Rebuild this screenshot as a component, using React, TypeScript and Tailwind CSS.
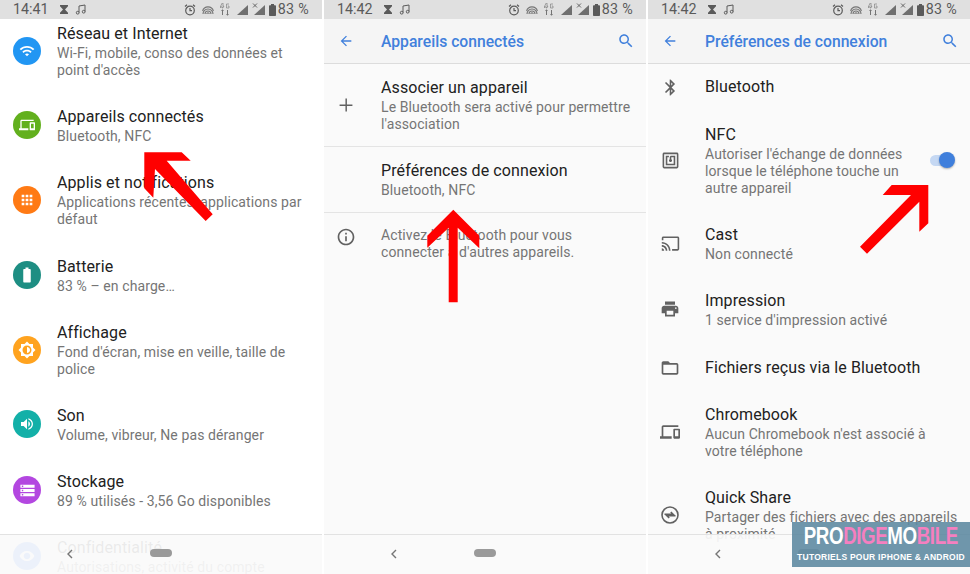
import React from "react";

const P = {
  wifi: "M1 9l2 2c4.97-4.97 13.03-4.97 18 0l2-2C16.93 2.93 7.08 2.93 1 9zm8 8l3 3 3-3c-1.65-1.66-4.34-1.66-6 0zm-4-4l2 2c2.76-2.76 7.24-2.76 10 0l2-2C15.14 9.14 8.87 9.14 5 13z",
  devices: "M4 6h18V4H4c-1.1 0-2 .9-2 2v11H0v3h14v-3H4V6zm19 2h-6c-.55 0-1 .45-1 1v10c0 .55.45 1 1 1h6c.55 0 1-.45 1-1V9c0-.55-.45-1-1-1zm-1 9h-4v-7h4v7z",
  battery: "M15.67 4H14V2h-4v2H8.33C7.6 4 7 4.6 7 5.33v15.33C7 21.4 7.6 22 8.33 22h7.33c.74 0 1.34-.6 1.34-1.33V5.33C17 4.6 16.4 4 15.67 4z",
  bright: "M20 8.69V4h-4.69L12 .69 8.69 4H4v4.69L.69 12 4 15.31V20h4.69L12 23.31 15.31 20H20v-4.69L23.31 12 20 8.69zM12 18c-3.31 0-6-2.69-6-6s2.69-6 6-6 6 2.69 6 6-2.69 6-6 6zm0-10v8c2.21 0 4-1.79 4-4s-1.79-4-4-4z",
  volume: "M3 9v6h4l5 5V4L7 9H3zm13.5 3c0-1.77-1.02-3.29-2.5-4.03v8.05c1.48-.73 2.5-2.25 2.5-4.02zM14 3.23v2.06c2.89.86 5 3.54 5 6.71s-2.11 5.85-5 6.71v2.06c4.01-.91 7-4.49 7-8.77s-2.99-7.86-7-8.77z",
  storage: "M2 20h20v-4H2v4zm2-3h2v2H4v-2zM2 4v4h20V4H2zm4 3H4V5h2v2zm-4 7h20v-4H2v4zm2-3h2v2H4v-2z",
  apps: "M4 8h4V4H4v4zm6 12h4v-4h-4v4zm-6 0h4v-4H4v4zm0-6h4v-4H4v4zm6 0h4v-4h-4v4zm6-10v4h4V4h-4zm-6 4h4V4h-4v4zm6 6h4v-4h-4v4zm0 6h4v-4h-4v4z",
  eye: "M12 4.5C7 4.5 2.73 7.61 1 12c1.73 4.39 6 7.5 11 7.5s9.27-3.11 11-7.5c-1.73-4.39-6-7.5-11-7.5zM12 17c-2.76 0-5-2.24-5-5s2.24-5 5-5 5 2.24 5 5-2.24 5-5 5z",
  back: "M20 11H7.83l5.59-5.59L12 4l-8 8 8 8 1.41-1.41L7.83 13H20v-2z",
  search: "M15.5 14h-.79l-.28-.27C15.41 12.59 16 11.11 16 9.5 16 5.91 13.09 3 9.5 3S3 5.91 3 9.5 5.91 16 9.5 16c1.61 0 3.09-.59 4.23-1.57l.27.28v.79l5 4.99L20.49 19l-4.99-5zm-6 0C7.01 14 5 11.99 5 9.5S7.01 5 9.5 5 14 7.01 14 9.5 11.99 14 9.5 14z",
  info: "M11 7h2v2h-2zm0 4h2v6h-2zm1-9C6.48 2 2 6.48 2 12s4.48 10 10 10 10-4.48 10-10S17.52 2 12 2zm0 18c-4.41 0-8-3.59-8-8s3.59-8 8-8 8 3.59 8 8-3.59 8-8 8z",
  plus: "M19 13h-6v6h-1.6v-6H5v-1.6h6.4V5H13v6.4h6z",
  bluetooth: "M17.71 7.71L12 2h-1v7.59L6.41 5 5 6.41 10.59 12 5 17.59 6.41 19 11 14.41V22h1l5.71-5.71-4.3-4.29 4.3-4.29zM13 5.83l1.88 1.88L13 9.59V5.83zm1.88 10.46L13 18.17v-3.76l1.88 1.88z",
  nfc: "M20 2H4c-1.1 0-2 .9-2 2v16c0 1.1.9 2 2 2h16c1.1 0 2-.9 2-2V4c0-1.1-.9-2-2-2zm0 18H4V4h16v16zM18 6h-5c-1.1 0-2 .9-2 2v2.28c-.6.35-1 .98-1 1.72 0 1.1.9 2 2 2s2-.9 2-2c0-.74-.4-1.38-1-1.72V8h3v8H8V8h2V6H6v12h12V6z",
  cast: "M21 3H3c-1.1 0-2 .9-2 2v3h2V5h18v14h-7v2h7c1.1 0 2-.9 2-2V5c0-1.1-.9-2-2-2zM1 18v3h3c0-1.66-1.34-3-3-3zm0-4v2c2.76 0 5 2.24 5 5h2c0-3.87-3.13-7-7-7zm0-4v2c4.97 0 9 4.03 9 9h2c0-6.08-4.93-11-11-11z",
  print: "M19 8H5c-1.66 0-3 1.34-3 3v6h4v4h12v-4h4v-6c0-1.66-1.34-3-3-3zm-3 11H8v-5h8v5zm3-7c-.55 0-1-.45-1-1s.45-1 1-1 1 .45 1 1-.45 1-1 1zm-1-9H6v4h12V3z",
  folder: "M20 6h-8l-2-2H4c-1.1 0-1.99.9-1.99 2L2 18c0 1.1.9 2 2 2h16c1.1 0 2-.9 2-2V8c0-1.1-.9-2-2-2zm0 12H4V8h16v10z",
};

function Ico({ d, size = 24, className = "" }: { d: string; size?: number; className?: string }) {
  return (
    <svg width={size} height={size} viewBox="0 0 24 24" className={"block shrink-0 fill-current " + className}>
      <path d={d} />
    </svg>
  );
}

function Circle({ bg, d, size = 16 }: { bg: string; d: string; size?: number }) {
  return (
    <div className={"flex h-[28px] w-[28px] shrink-0 items-center justify-center rounded-full text-white " + bg}>
      <Ico d={d} size={size} />
    </div>
  );
}

function QuickShare() {
  return (
    <svg width="20" height="20" viewBox="0 0 20 20" fill="none" stroke="currentColor" strokeWidth="1.6" className="block shrink-0">
      <circle cx="10" cy="10" r="8" />
      <path d="M4.500 9.200H13L10.800 7" />
      <path d="M15.500 10.800H7L9.200 13" />
    </svg>
  );
}

function Text({ title, lines = [] }: { title: string; lines?: string[] }) {
  return (
    <div className={"min-w-0 flex-1 " + (lines.length ? "pt-[1px]" : "")}>
      <div className="h-[20px] text-[16px] leading-[20px] tracking-[0.1px] whitespace-nowrap text-[#212121]">{title}</div>
      {lines.length > 0 && (
        <div className="mt-[1px]">
          {lines.map((l) => (
            <div key={l} className="h-[17px] text-[14px] leading-[17px] tracking-[0.1px] whitespace-nowrap text-[#757575]">
              {l}
            </div>
          ))}
        </div>
      )}
    </div>
  );
}

function Row({
  icon,
  title,
  lines = [],
  h,
  iconW = "w-[57px] justify-center pr-[13px]",
  border = false,
  extra,
}: {
  icon?: React.ReactNode;
  title: string;
  lines?: string[];
  h: string;
  iconW?: string;
  border?: boolean;
  extra?: React.ReactNode;
}) {
  return (
    <div className={"flex shrink-0 items-center " + h + (border ? " border-b border-[#e4e4e4]" : "")}>
      <div className={"flex shrink-0 text-[#616161] " + iconW}>{icon}</div>
      <Text title={title} lines={lines} />
      {extra}
    </div>
  );
}

function StatusBar({ time }: { time: string }) {
  return (
    <div className="relative z-10 flex h-[19px] shrink-0 items-center bg-[#e0e0e0] pl-[13px] pr-[13px] text-[#5a5a5a]">
      <span className="w-[45px] text-[14.3px] leading-[19px]">{time}</span>
      <svg width="10" height="9" viewBox="0 0 10 9" className="ml-[1px] fill-current">
        <path d="M1 0h8v1.2L6 4.5l3 3.3V9H1V7.8l3-3.3-3-3.3z" />
      </svg>
      <svg width="11" height="11" viewBox="0 0 11 11" fill="none" stroke="currentColor" strokeWidth="1" className="ml-[6px]">
        <path d="M4 8.5V2L10 1V7.5" />
        <circle cx="2.7" cy="8.7" r="1.4" />
        <circle cx="8.7" cy="7.700" r="1.4" />
      </svg>
      <div className="flex-1" />
      <svg width="12" height="12" viewBox="0 0 12 12" fill="none" stroke="currentColor" strokeWidth="1.2">
        <circle cx="6" cy="6.5" r="4.3" />
        <path d="M6 4v2.7h2M1 2.5 3 .8M11 2.5 9 .8" />
      </svg>
      <svg width="12" height="12" viewBox="0 0 12 12" fill="none" stroke="currentColor" strokeWidth="1.1" className="ml-[6px] opacity-80">
        <path d="M1 10a5 5 0 0 1 10 0M3 10a3 3 0 0 1 6 0M4.8 10a1.2 1.2 0 0 1 2.4 0" />
        <path d="M.6 7A5.6 5.6 0 0 1 11.4 7" />
      </svg>
      <svg width="10" height="13" viewBox="0 0 10 13" className="ml-[6px] fill-current opacity-80">
        <path d="M0 4.5 2.2 0h.8v3h.7v.8H3v1.2H2.2V3.8H.8V4.5zM9 1H6.500v4H9V3H7.800" stroke="currentColor" strokeWidth=".6" fill="none" />
        <path d="M2 12V8H1l1.5-1.8L4 8H3v4zM7 7v4H6l1.5 1.8L9 11H8V7z" />
      </svg>
      <svg width="12" height="12" viewBox="0 0 12 12" className="ml-[6px] fill-current">
        <path d="M12 1v10H1z" opacity=".85" />
      </svg>
      <svg width="14" height="13" viewBox="0 0 14 13" className="ml-[4px] fill-current">
        <path d="M13 2v10H2z" opacity=".85" />
        <path d="M1 .5 5 4.5M5 .5 1 4.5" stroke="currentColor" strokeWidth=".9" />
      </svg>
      <svg width="7" height="12" viewBox="0 0 7 12" className="ml-[3px] fill-current">
        <path d="M2 0h3v1.300h1.200a.8.8 0 0 1 .8.8v9.100a.8.8 0 0 1-.8.8H.8a.8.8 0 0 1-.8-.8V2.100a.8.8 0 0 1 .8-.8H2z" />
      </svg>
      <span className="ml-[2px] text-[14.3px] leading-[19px] tracking-[0.3px]">83 %</span>
    </div>
  );
}

function NavBar() {
  return (
    <div className="absolute inset-x-0 bottom-0 flex h-[40px] items-start border-t border-[#e2e2e2] bg-[#fafafa]/[0.93] pt-[14px]">
      <svg width="8" height="10" viewBox="0 0 8 10" fill="none" stroke="#757575" strokeWidth="1.4" className="ml-[66px]">
        <path d="M6 1 2 5l4 4" />
      </svg>
      <div className="ml-[76px] h-[8px] w-[22px] rounded-full bg-[#9a9a9a]" />
    </div>
  );
}

function ActionBar({ title }: { title: string }) {
  return (
    <div className="flex h-[45px] shrink-0 items-center border-b border-[#dcdcdc] bg-[#f5f5f5] pl-[14px] pr-[11px] text-[#4180dc]">
      <Ico d={P.back} size={16} />
      <div className="ml-[27px] mt-[1px] flex-1 text-[15.7px] font-medium leading-[20px]">{title}</div>
      <Ico d={P.search} size={18} />
    </div>
  );
}

const I1 = "w-[57px] justify-center pr-[3px]";
const I2 = "w-[57px] justify-center pr-[13px]";

export default function App() {
  return (
    <div className="relative flex h-[574px] w-[970px] justify-between overflow-hidden bg-white font-['Roboto',sans-serif]">
      {/* left */}
      <div className="relative flex h-full w-[322px] flex-col overflow-hidden bg-white">
        <StatusBar time="14:41" />
        <div className="-mt-[10px] flex flex-col">
          <Row h="h-[83px]" iconW={I1} icon={<Circle bg="bg-[#2196f3]" d={P.wifi} />} title="Réseau et Internet" lines={["Wi-Fi, mobile, conso des données et", "point d'accès"]} />
          <Row h="h-[66px]" iconW={I1} icon={<Circle bg="bg-[#62b01e]" d={P.devices} />} title="Appareils connectés" lines={["Bluetooth, NFC"]} />
          <Row h="h-[84px]" iconW={I1} icon={<Circle bg="bg-[#ff7a14]" d={P.apps} />} title="Applis et notifications" lines={["Applications récentes, applications par", "défaut"]} />
          <Row h="h-[66px]" iconW={I1} icon={<Circle bg="bg-[#1e8e83]" d={P.battery} size={18} />} title="Batterie" lines={["83 % – en charge…"]} />
          <Row h="h-[83px]" iconW={I1} icon={<Circle bg="bg-[#ffa31f]" d={P.bright} size={18} />} title="Affichage" lines={["Fond d'écran, mise en veille, taille de", "police"]} />
          <Row h="h-[66px]" iconW={I1} icon={<Circle bg="bg-[#13b0a8]" d={P.volume} />} title="Son" lines={["Volume, vibreur, Ne pas déranger"]} />
          <Row h="h-[66px]" iconW={I1} icon={<Circle bg="bg-[#b347e0]" d={P.storage} size={17} />} title="Stockage" lines={["89 % utilisés - 3,56 Go disponibles"]} />
          <Row h="h-[66px]" iconW={I1} icon={<Circle bg="bg-[#4285f4]" d={P.eye} />} title="Confidentialité" lines={["Autorisations, activité du compte"]} />
        </div>
        <NavBar />
      </div>

      {/* middle */}
      <div className="relative flex h-full w-[322px] flex-col overflow-hidden bg-[#fafafa]">
        <StatusBar time="14:42" />
        <ActionBar title="Appareils connectés" />
        <Row h="h-[83px]" border iconW={I2} icon={<Ico d={P.plus} size={22} />} title="Associer un appareil" lines={["Le Bluetooth sera activé pour permettre", "l'association"]} />
        <Row h="h-[66px]" border title="Préférences de connexion" lines={["Bluetooth, NFC"]} />
        <div className="flex pt-[14px]">
          <div className="flex w-[57px] justify-center pr-[13px] text-[#616161]">
            <Ico d={P.info} size={20} />
          </div>
          <div className="text-[14px] leading-[17px] tracking-[0.1px] text-[#757575]">
            <div>Activez le Bluetooth pour vous</div>
            <div>connecter à d'autres appareils.</div>
          </div>
        </div>
        <NavBar />
      </div>

      {/* right */}
      <div className="relative flex h-full w-[322px] flex-col overflow-hidden bg-[#fafafa]">
        <StatusBar time="14:42" />
        <ActionBar title="Préférences de connexion" />
        <Row h="h-[46px]" iconW={I2} icon={<Ico d={P.bluetooth} size={19} />} title="Bluetooth" />
        <Row
          h="h-[100px]"
          iconW={I2}
          icon={<Ico d={P.nfc} size={19} />}
          title="NFC"
          lines={["Autoriser l'échange de données", "lorsque le téléphone touche un", "autre appareil"]}
          extra={
            <div className="relative mr-[18px] h-[11px] w-[22px] rounded-full bg-[#c5d8f3]">
              <div className="absolute -right-[3px] -top-[3px] h-[16px] w-[16px] rounded-full bg-[#3f7fdc] shadow-[0_1px_2px_rgba(0,0,0,0.3)]" />
            </div>
          }
        />
        <Row h="h-[66px]" iconW={I2} icon={<Ico d={P.cast} size={19} />} title="Cast" lines={["Non connecté"]} />
        <Row h="h-[66px]" iconW={I2} icon={<Ico d={P.print} size={20} />} title="Impression" lines={["1 service d'impression activé"]} />
        <Row h="h-[48px] pt-[4px]" iconW={I2} icon={<Ico d={P.folder} size={20} />} title="Fichiers reçus via le Bluetooth" />
        <Row h="h-[83px]" iconW={I2} icon={<Ico d={P.devices} size={20} />} title="Chromebook" lines={["Aucun Chromebook n'est associé à", "votre téléphone"]} />
        <Row h="h-[83px]" iconW={I2} icon={<QuickShare />} title="Quick Share" lines={["Partager des fichiers avec des appareils", "à proximité"]} />
        <NavBar />
      </div>

      {/* annotation arrows */}
      <svg width="970" height="574" viewBox="0 0 970 574" className="pointer-events-none absolute left-0 top-0 fill-[#ff0000]">
        <polygon points="144.300,152.300 181.700,152.300 190.700,160.700 166.700,160.700 212.700,214.300 205.700,221 155,169 153.300,197.700 144.300,188.300" />
        <polygon points="453.300,209.700 479.300,235.700 479.300,248.300 457.700,227.700 457.700,302.300 448.700,302.300 448.700,227.700 427.300,247.700 427.300,235.700" />
        <polygon points="928.300,185 928.300,223.300 919.300,231.700 919.300,201.700 867,253.700 860,246.700 911,195 882.700,195 891.700,185" />
      </svg>

      {/* watermark */}
      <div className="absolute bottom-[7px] right-0 flex h-[45px] w-[178px] flex-col items-center bg-[#5f8ba2]/90 font-['Liberation_Sans',sans-serif] font-bold">
        <div className="h-[27px] origin-top scale-x-[0.78] whitespace-nowrap text-[24px] leading-[28px] tracking-[-0.5px] text-white">
          PRO<span className="text-[#f57fc0]">DIGE</span>MO<span className="text-[#f57fc0]">BILE</span>
        </div>
        <div className="mt-[2px] whitespace-nowrap text-[8.5px] leading-[12px] tracking-[0.25px] text-white">TUTORIELS POUR IPHONE &amp; ANDROID</div>
      </div>
    </div>
  );
}
